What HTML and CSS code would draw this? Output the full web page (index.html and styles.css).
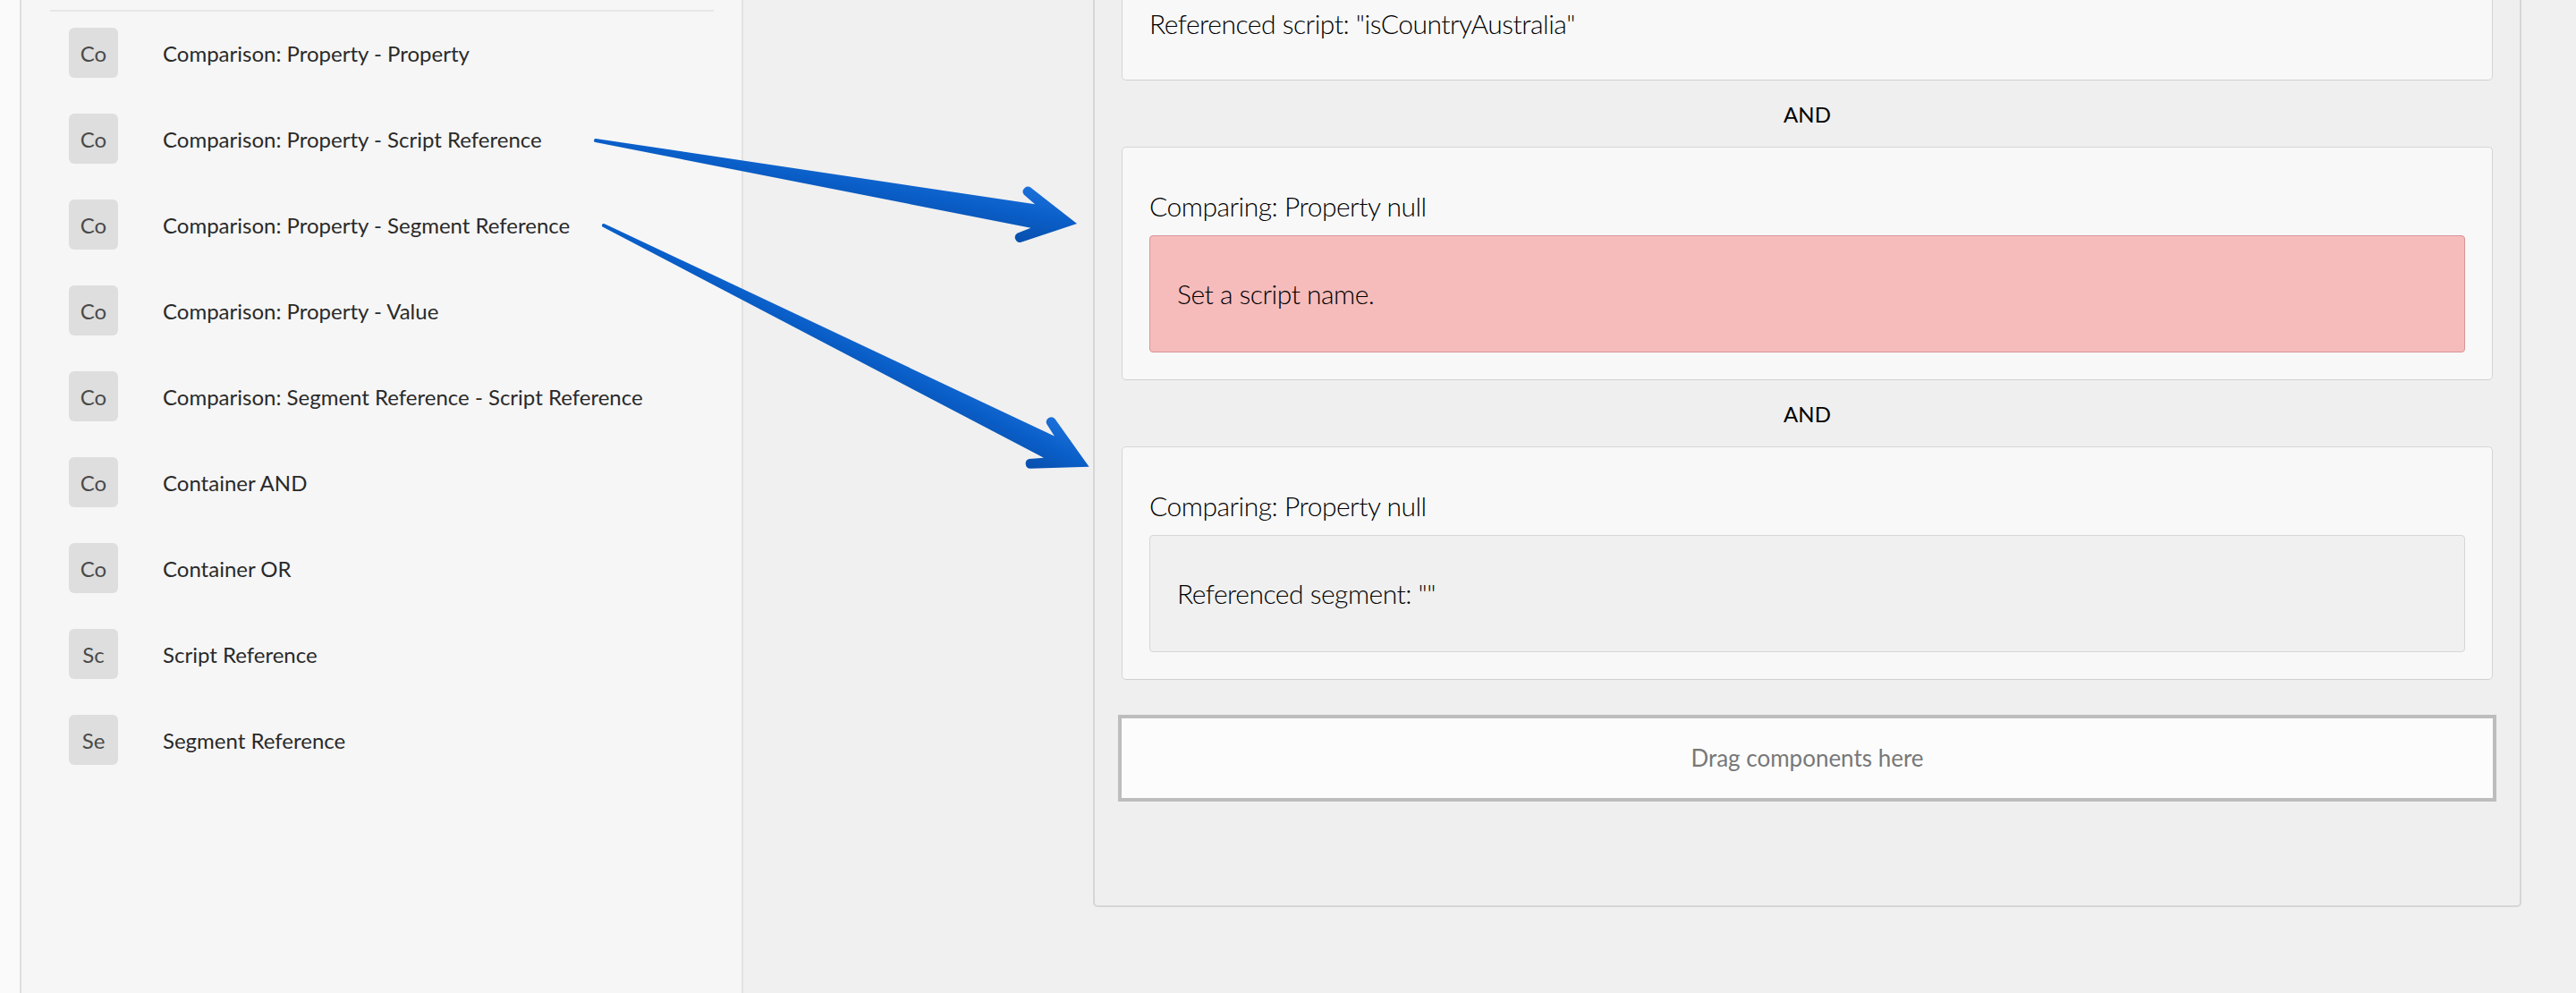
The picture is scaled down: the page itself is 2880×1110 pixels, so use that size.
FILE: index.html
```html
<!DOCTYPE html>
<html lang="en">
<head>
<meta charset="utf-8">
<title>Segment builder</title>
<link rel="stylesheet" href="styles.css">
</head>
<body>
<div class="app">
  <aside class="sidebar">
    <div class="divider"></div>
    <ul class="components">
      <li class="component"><span class="badge">Co</span><span class="label">Comparison: Property - Property</span></li>
      <li class="component"><span class="badge">Co</span><span class="label">Comparison: Property - Script Reference</span></li>
      <li class="component"><span class="badge">Co</span><span class="label">Comparison: Property - Segment Reference</span></li>
      <li class="component"><span class="badge">Co</span><span class="label">Comparison: Property - Value</span></li>
      <li class="component"><span class="badge">Co</span><span class="label">Comparison: Segment Reference - Script Reference</span></li>
      <li class="component"><span class="badge">Co</span><span class="label">Container AND</span></li>
      <li class="component"><span class="badge">Co</span><span class="label">Container OR</span></li>
      <li class="component"><span class="badge">Sc</span><span class="label">Script Reference</span></li>
      <li class="component"><span class="badge">Se</span><span class="label">Segment Reference</span></li>
    </ul>
  </aside>
  <main class="canvas">
    <section class="builder">
      <div class="card">
        <p class="card-text">Referenced script: "isCountryAustralia"</p>
      </div>
      <div class="operator">AND</div>
      <div class="card">
        <p class="card-text">Comparing: Property null</p>
        <div class="inner inner-error">Set a script name.</div>
      </div>
      <div class="operator">AND</div>
      <div class="card">
        <p class="card-text">Comparing: Property null</p>
        <div class="inner inner-muted">Referenced segment: ""</div>
      </div>
      <div class="dropzone">Drag components here</div>
    </section>
  </main>
</div>
<svg class="annotations" width="2880" height="1110" viewBox="0 0 2880 1110" aria-hidden="true">
  <defs>
    <linearGradient id="arrowFill" gradientUnits="userSpaceOnUse" x1="0" y1="-30" x2="0" y2="30">
      <stop offset="0" stop-color="#1a6fd8"/>
      <stop offset="0.5" stop-color="#0a5ec8"/>
      <stop offset="1" stop-color="#0850ae"/>
    </linearGradient>
  </defs>
  <g transform="translate(666 157) rotate(9.81)">
    <path fill="url(#arrowFill)" d="M0,-2 L496,-13.5 L482,-22 A5.5,5.5 0 0 1 488,-31 L546,0 L488,31 A5.5,5.5 0 0 1 482,22 L496,13.5 L0,2 A2,2 0 0 1 0,-2 Z"/>
  </g>
  <g transform="translate(675 252) rotate(26.44)">
    <path fill="url(#arrowFill)" d="M0,-2 L556,-13.5 L542,-22 A5.5,5.5 0 0 1 548,-31 L606,0 L548,31 A5.5,5.5 0 0 1 542,22 L556,13.5 L0,2 A2,2 0 0 1 0,-2 Z"/>
  </g>
</svg>
</body>
</html>
```
FILE: styles.css
```css
html, body {
  margin: 0;
  padding: 0;
  height: 1110px;
  overflow: hidden;
}

body {
  background: #fafafa;
  font-family: Lato, "Open Sans", "Liberation Sans", sans-serif;
  position: relative;
}

.app {
  display: flex;
  height: 1110px;
}

.sidebar {
  box-sizing: border-box;
  margin-left: 22px;
  width: 809px;
  height: 1110px;
  background: #f6f6f6;
  border-left: 2px solid #dedede;
  border-right: 2px solid #e2e2e2;
  padding-top: 11px;
  flex: none;
}

.divider {
  height: 2px;
  background: #e6e6e6;
  margin: 0 31px 0 32px;
}

.components {
  list-style: none;
  margin: -2px 31px 0 32px;
  padding: 0;
}

.component {
  display: flex;
  align-items: center;
  height: 96px;
  padding-left: 21px;
}

.badge {
  flex: none;
  width: 55px;
  height: 56px;
  border-radius: 6px;
  background: #dedede;
  color: #4a4a4a;
  font-size: 24px;
  display: flex;
  align-items: center;
  justify-content: center;
}

.label {
  margin-left: 50px;
  font-size: 24px;
  color: #2a2a2a;
  white-space: nowrap;
}

.canvas {
  flex: 1;
  background: #f0f0f0;
  padding: 0 61px 0 391px;
  min-width: 0;
}

.builder {
  box-sizing: border-box;
  margin-top: -72px;
  border: 2px solid #d6d6d6;
  border-radius: 5px;
  background: #efefef;
  padding: 30px 30px 116px;
}

.card {
  background: #f8f8f8;
  border: 1px solid #d6d6d6;
  border-bottom-color: #d0d0d0;
  border-radius: 5px;
  padding: 30px 30px 30px;
}

.card-text {
  margin: 17px 0 15px 0;
  font-size: 30px;
  line-height: 36px;
  font-weight: 300;
  letter-spacing: -0.5px;
  color: #000000;
}

.inner {
  border: 1px solid #d4d4d4;
  border-radius: 4px;
  padding: 46px 30px 47px;
  font-size: 30px;
  line-height: 36px;
  font-weight: 300;
  letter-spacing: -0.5px;
  color: #000000;
}

.inner-error {
  background: #f6bcbc;
  border-color: #d89496;
}

.inner-muted {
  background: #f0f0f0;
  border-color: #d6d6d6;
}

.operator {
  height: 74px;
  display: flex;
  align-items: center;
  justify-content: center;
  font-size: 24px;
  color: #000000;
}

.dropzone {
  margin: 39px -4px 0;
  border: 4px solid #bdbdbd;
  background: #fcfcfc;
  padding: 28px 0 29px;
  text-align: center;
  font-size: 26px;
  line-height: 32px;
  color: #787878;
}

.annotations {
  position: absolute;
  top: 0;
  left: 0;
  pointer-events: none;
}
```
